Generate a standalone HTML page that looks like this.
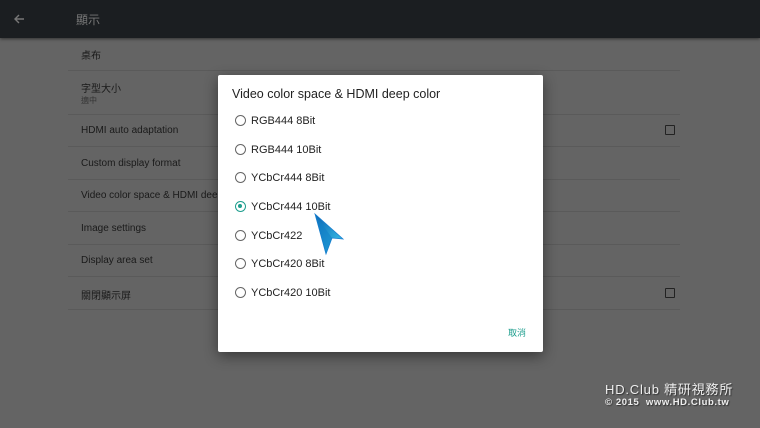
<!DOCTYPE html>
<html><head><meta charset="utf-8"><style>
*{margin:0;padding:0;box-sizing:border-box}
body{width:760px;height:428px;background:#646464;position:relative;overflow:hidden;font-family:"Liberation Sans","Noto Sans CJK TC",sans-serif}
.hdr{position:absolute;left:0;top:0;width:760px;height:38px;background:#1b1e21;box-shadow:0 1px 3px rgba(0,0,0,.5)}
.t{position:absolute;font-size:10px;color:#1a1a1a;white-space:nowrap}
.ln{position:absolute;left:68px;width:612px;height:1px;background:#5a5a5a}
.cb{position:absolute;left:665px;width:10px;height:10px;border:1.5px solid #222;border-radius:1px}
.dlg{position:absolute;left:218px;top:75px;width:325px;height:277px;background:#fff;box-shadow:0 4px 14px rgba(0,0,0,.45);border-radius:2px}
.o{position:absolute;left:16px;font-size:11px;color:#222;white-space:nowrap;line-height:12px}
.r{position:absolute;left:17px;width:11px;height:11px;border:1.5px solid #666;border-radius:50%}
.wm{position:absolute;color:#eee;text-shadow:1px 1px 1px #333;white-space:nowrap;line-height:1}
</style></head><body>
<div class="hdr">
<svg style="position:absolute;left:13px;top:13px" width="12" height="12" viewBox="0 0 12 12"><path d="M11 6H2M6 2L2 6l4 4" stroke="#777" stroke-width="1.4" fill="none"/></svg>
<div class="t" style="left:76px;top:11px;font-size:12px;color:#777">顯示</div>
</div>
<div class="t" style="left:81px;top:47px">桌布</div>
<div class="ln" style="top:70px"></div>
<div class="t" style="left:81px;top:80px">字型大小</div>
<div class="t" style="left:81px;top:95px;font-size:8px;color:#333">適中</div>
<div class="ln" style="top:114px"></div>
<div class="t" style="left:81px;top:125px">HDMI auto adaptation</div>
<div class="cb" style="top:125px"></div>
<div class="ln" style="top:146px"></div>
<div class="t" style="left:81px;top:158px">Custom display format</div>
<div class="ln" style="top:179px"></div>
<div class="t" style="left:81px;top:190px">Video color space &amp; HDMI deep</div>
<div class="ln" style="top:211px"></div>
<div class="t" style="left:81px;top:223px">Image settings</div>
<div class="ln" style="top:244px"></div>
<div class="t" style="left:81px;top:255px">Display area set</div>
<div class="ln" style="top:276px"></div>
<div class="t" style="left:81px;top:287px">關閉顯示屏</div>
<div class="cb" style="top:288px"></div>
<div class="ln" style="top:309px"></div>
<div class="dlg">
<div class="o" style="left:14px;top:12px;font-size:12.5px;line-height:14px;color:#222">Video color space &amp; HDMI deep color</div>
<div class="r" style="top:40px"></div><div class="o" style="left:33px;top:40px">RGB444 8Bit</div>
<div class="r" style="top:69px"></div><div class="o" style="left:33px;top:69px">RGB444 10Bit</div>
<div class="r" style="top:97px"></div><div class="o" style="left:33px;top:97px">YCbCr444 8Bit</div>
<div class="r" style="top:126px;border-color:#1e9e8e"><div style="position:absolute;left:2px;top:2px;width:4px;height:4px;border-radius:50%;background:#1e9e8e"></div></div><div class="o" style="left:33px;top:126px">YCbCr444 10Bit</div>
<div class="r" style="top:155px"></div><div class="o" style="left:33px;top:155px">YCbCr422</div>
<div class="r" style="top:183px"></div><div class="o" style="left:33px;top:183px">YCbCr420 8Bit</div>
<div class="r" style="top:212px"></div><div class="o" style="left:33px;top:212px">YCbCr420 10Bit</div>
<div class="o" style="left:290px;top:252px;font-size:9px;color:#1e9e8e">取消</div>
</div>
<svg style="position:absolute;left:312px;top:212px" width="34" height="46" viewBox="0 0 34 46"><defs><linearGradient id="g" x1="0" y1="0" x2="1" y2="1"><stop offset="0" stop-color="#0a5fb0"/><stop offset="1" stop-color="#3fd0f0"/></linearGradient></defs><path d="M3 2L31 27 20 26 14 42Z" fill="url(#g)" stroke="#1a7fd0" stroke-width=".8"/><path d="M3 2L20 26 14 42Z" fill="#1080c8" opacity=".6"/></svg>
<div class="wm" style="left:605px;top:383px;font-size:13px;letter-spacing:.8px">HD.Club 精研視務所</div>
<div class="wm" style="left:605px;top:398px;font-size:9.5px;font-weight:bold;letter-spacing:.6px">© 2015&nbsp; www.HD.Club.tw</div>
</body></html>
